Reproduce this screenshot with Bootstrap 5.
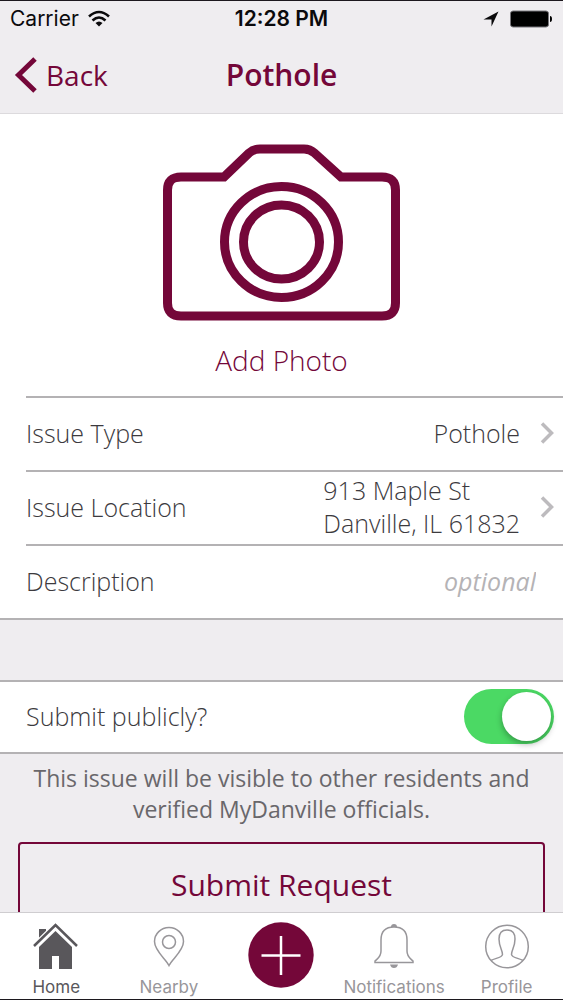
<!DOCTYPE html>
<html lang="en">
<head>
<meta charset="utf-8">
<meta name="viewport" content="width=device-width, initial-scale=1">
<title>Pothole</title>
<link href="https://cdn.jsdelivr.net/npm/bootstrap@5.3.0/dist/css/bootstrap.min.css" rel="stylesheet">
<style>
:root { --wine: #740739; --wash: #efedf0; --rule: #b4b2b4; --ink: #3c3a3e; }
body { font-family: "Open Sans", sans-serif; font-size: 25px; font-weight: 300; line-height: 33px; color: var(--ink); background: var(--wash); }
button { font-weight: inherit; }
.screen { border-top: 1px solid #1c181e; border-bottom: 1px solid #1c181e; }
.topbar { border-bottom: 1px solid #dcdadd; }
.status { font-family: Inter, sans-serif; font-size: 21px; font-weight: 400; line-height: 36px; color: #0b0a0c; padding: 0 10px; }
.status .clock { font-weight: 600; }
.titlebar { height: 76px; padding: 0 14px; font-size: 28px; color: var(--wine); }
.titlebar a { color: var(--wine); font-weight: 400; }
.titlebar h1 { font-size: 30px; font-weight: 600; }
.photo { color: var(--wine); font-size: 28px; padding: 30px 0 17px; line-height: 38px; }
.photo span { margin-top: 20px; }
.issue-list { padding-left: 26px; border-bottom: 2px solid var(--rule); }
.issue-row { height: 74px; border-top: 2px solid var(--rule); padding: 0 9px 2px 0; color: var(--ink); }
.issue-row .go { margin-left: 20px; }
.note-field { color: var(--ink); font-weight: 300; font-style: italic; padding-right: 18px; outline: 0; min-width: 0; }
.note-field::placeholder { color: #b5b3b6; opacity: 1; font-weight: 400; }
.public-row { margin-top: 60px; height: 74px; padding: 0 9px 2px 26px; border-top: 2px solid var(--rule); border-bottom: 2px solid var(--rule); }
.toggle.form-check-input { width: 90px; height: 55px; margin: 0; padding: 3px; border: 0; border-radius: 28px; background: #d8d8da; }
.toggle::after { content: ""; display: block; width: 49px; height: 49px; border-radius: 50%; background: #fff; box-shadow: 0 3px 6px rgba(0,0,0,.3); }
.toggle.form-check-input:checked { background: #4bd964; }
.toggle:checked::after { margin-left: auto; }
.hint { font-size: 23px; font-weight: 400; line-height: 31px; color: #69676b; padding: 9px 24px 0; }
.submit { margin: 17px 18px 0; height: 84px; border: 2px solid var(--wine); border-radius: 4px; color: var(--wine); font-size: 30px; font-weight: 400; }
.tabs { height: 87px; border-top: 1px solid #cfcdd0; font-family: Inter, sans-serif; font-size: 17px; font-weight: 400; line-height: 22px; }
.tabs a { color: #98969a; flex: 1 1 0; padding-top: 9px; }
.tabs a.active { color: #59575b; }
.tabs svg { height: 54px; }
.tabs svg.plus { height: 66px; }
</style>
</head>
<body>
<div class="screen vh-100 d-flex flex-column overflow-hidden">
  <header class="topbar flex-shrink-0">
    <div class="status row g-0">
      <div class="col d-flex align-items-center gap-2">Carrier
        <svg width="24" height="18" viewBox="0 0 24 18" fill="none" stroke="#0b0a0c" stroke-width="2.600" aria-hidden="true"><path d="M2 6.500Q12-2.500 22 6.500M5.500 10.500Q12 4.500 18.500 10.500"/><path d="M8.500 13Q12 10 15.500 13L12 16.500Z" fill="#0b0a0c" stroke="none"/></svg>
      </div>
      <div class="col-auto clock">12:28 PM</div>
      <div class="col d-flex align-items-center justify-content-end gap-2">
        <svg width="18" height="16" viewBox="0 0 18 16" aria-hidden="true"><path d="M15.500 .5L8.500 15.500V8.500H.5Z" fill="#0b0a0c"/></svg>
        <svg width="44" height="18" viewBox="0 0 44 18" aria-hidden="true"><rect x="1.500" y="1" width="38" height="16" rx="2.500" stroke="#77757a"/><path d="M41 6Q43 6 43 9Q43 12 41 12Z"/></svg>
      </div>
    </div>
    <nav class="titlebar row g-0 align-items-center">
      <div class="col d-flex"><a href="#" class="d-flex align-items-center text-decoration-none">
        <svg width="24" height="38" viewBox="0 0 24 38" fill="none" stroke="currentColor" stroke-width="5" class="me-2" aria-hidden="true"><path d="M21 3L4.500 19L21 35"/></svg>Back</a></div>
      <h1 class="col-auto m-0">Pothole</h1>
      <div class="col"></div>
    </nav>
  </header>

  <main class="flex-fill overflow-hidden">
    <section class="bg-white">
      <button type="button" class="photo w-100 border-0 bg-transparent d-flex flex-column align-items-center">
        <svg width="238" height="177" viewBox="0 0 238 177" fill="none" stroke="currentColor" stroke-width="9" aria-hidden="true">
          <path d="M18 33H61L86 9Q90.500 5 97 5H141Q147 5 151.500 9L178 33H219Q232.500 33 232.500 46V159Q232.500 172 219 172H18Q4.500 172 4.500 159V46Q4.500 33 18 33Z"/>
          <ellipse cx="118.500" cy="98" rx="57" ry="55.500"/><ellipse cx="118.500" cy="98" rx="38" ry="37"/>
        </svg>
        <span>Add Photo</span>
      </button>
      <div class="issue-list">
        <a href="#" class="issue-row d-flex align-items-center text-decoration-none">
          <span class="me-auto">Issue Type</span><span>Pothole</span>
          <svg class="go" width="14" height="22" viewBox="0 0 14 22" fill="none" stroke="#bdbbbe" stroke-width="3.500" aria-hidden="true"><path d="M2 1.500L11.500 11L2 20.500"/></svg>
        </a>
        <a href="#" class="issue-row d-flex align-items-center text-decoration-none">
          <span class="me-auto">Issue Location</span><span>913 Maple St<br>Danville, IL 61832</span>
          <svg class="go" width="14" height="22" viewBox="0 0 14 22" fill="none" stroke="#bdbbbe" stroke-width="3.500" aria-hidden="true"><path d="M2 1.500L11.500 11L2 20.500"/></svg>
        </a>
        <div class="issue-row d-flex align-items-center">
          <label for="note">Description</label>
          <input id="note" type="text" class="note-field flex-fill border-0 bg-transparent text-end" placeholder="optional">
        </div>
      </div>
    </section>

    <section class="public-row bg-white d-flex align-items-center justify-content-between">
      <label for="public">Submit publicly?</label>
      <input id="public" class="toggle form-check-input" type="checkbox" role="switch" checked>
    </section>
    <p class="hint text-center mb-0">This issue will be visible to other residents and verified MyDanville officials.</p>
    <div class="d-flex"><button type="button" class="submit flex-fill bg-transparent">Submit Request</button></div>
  </main>

  <nav class="tabs bg-white d-flex flex-shrink-0">
    <a href="#" class="active d-flex flex-column align-items-center text-decoration-none">
      <svg width="46" viewBox="0 0 46 54" aria-hidden="true"><path fill="currentColor" d="M6 7H13V11L6 18ZM22.500 9L39 25V47H26V34H19V47H6V25Z"/><path d="M1 24L22.500 3L44 24" fill="none" stroke="#fff" stroke-width="5"/><path d="M1 24L22.500 3L44 24" fill="none" stroke="currentColor" stroke-width="2.500"/></svg>Home</a>
    <a href="#" class="d-flex flex-column align-items-center text-decoration-none">
      <svg width="32" viewBox="0 0 32 54" fill="none" stroke="currentColor" stroke-width="1.500" aria-hidden="true"><path d="M16 43.500C13 37 1.500 29 1.500 19.500A14.500 14 0 0 1 30.500 19.500C30.500 29 19 37 16 43.500Z"/><circle cx="16" cy="20" r="6.500"/></svg>Nearby</a>
    <a href="#" class="d-flex flex-column align-items-center text-decoration-none" aria-label="New request">
      <svg class="plus" width="66" viewBox="0 0 66 66" aria-hidden="true"><circle cx="33" cy="33" r="32.700" fill="#740739"/><path d="M13.500 33.500H52.500M33 14V53" stroke="#fff" stroke-width="2.500"/></svg></a>
    <a href="#" class="d-flex flex-column align-items-center text-decoration-none">
      <svg width="42" viewBox="0 0 42 54" fill="none" stroke="currentColor" stroke-width="1.500" aria-hidden="true"><path d="M2 39C5 36 8 35 8 29V18Q8 5 21 5Q34 5 34 18V29C34 35 37 36 40 39V40.500H2Z"/><path d="M18 5Q18 2 21 2Q24 2 24 5ZM17 42.500H25Q24 46 21 46Q18 46 17 42.500Z" fill="currentColor" stroke="none"/></svg>Notifications</a>
    <a href="#" class="d-flex flex-column align-items-center text-decoration-none">
      <svg width="46" viewBox="0 0 46 54" fill="none" stroke="currentColor" stroke-width="1.500" aria-hidden="true"><circle cx="23" cy="24.500" r="21.300"/><path d="M7 38.500C11 36 18 36 18.500 32.500C18.500 28 15 25 15 17Q15 8 23 8Q31 8 31 17C31 25 27.500 28 27.500 32.500C28 36 35 36 39 38.500"/></svg>Profile</a>
  </nav>
</div>
<script src="https://cdn.jsdelivr.net/npm/bootstrap@5.3.0/dist/js/bootstrap.bundle.min.js"></script>
</body>
</html>
